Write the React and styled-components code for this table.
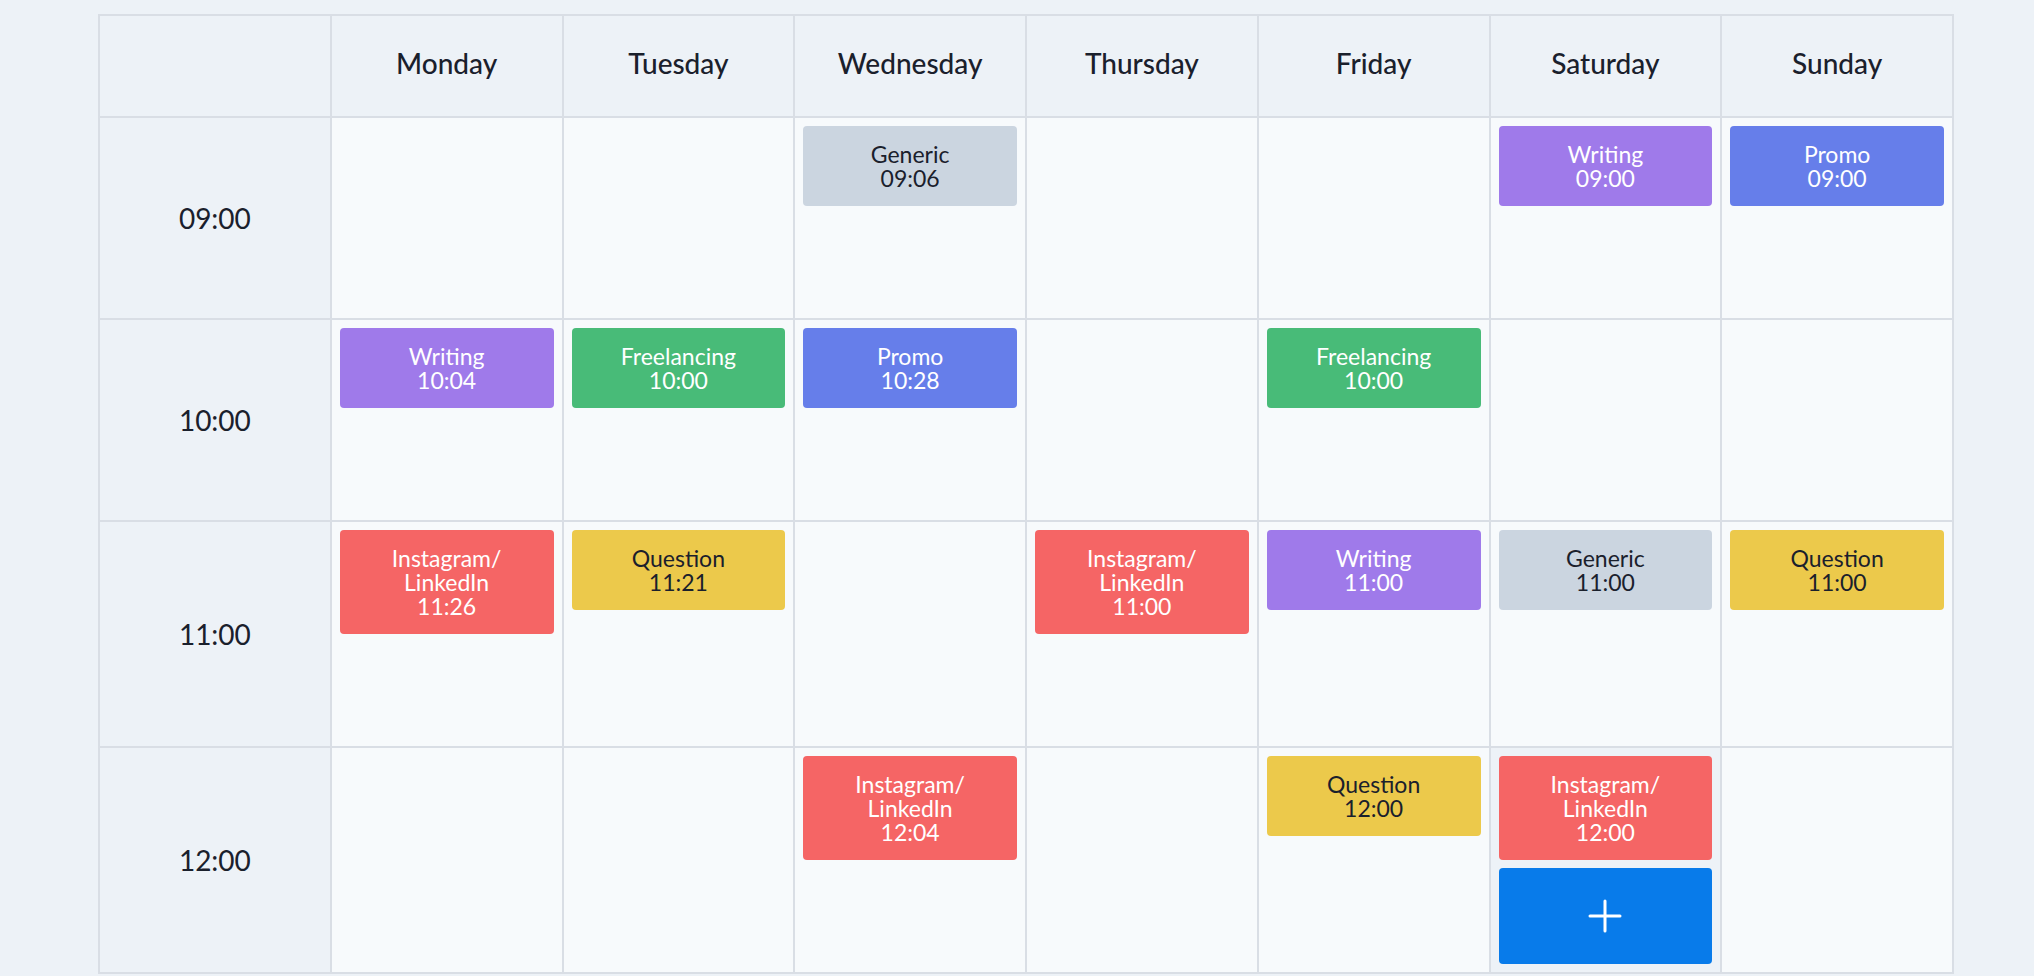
import React from 'react';
import styled, { createGlobalStyle } from 'styled-components';

const GlobalStyle = createGlobalStyle`
  html, body {
    margin: 0;
    padding: 0;
    overflow: hidden;
    background-color: #edf2f7;
    font-family: Lato, "Noto Sans", sans-serif;
    color: #1a202c;
  }
  * {
    box-sizing: border-box;
  }
`

const Page = styled.div`
  padding: 14px 80px 0 98px;
`

const Grid = styled.div`
  display: grid;
  grid-template-columns: repeat(8, 1fr);
  border-top: 2px solid #d9dee5;
  border-left: 2px solid #d9dee5;
`

const HeadCell = styled.div`
  display: flex;
  align-items: center;
  justify-content: center;
  height: 102px;
  padding-bottom: 6px;
  background-color: #edf2f7;
  border-right: 2px solid #d9dee5;
  border-bottom: 2px solid #d9dee5;
  font-size: 28px;
  font-weight: 500;
`

const TimeCell = styled.div`
  display: flex;
  align-items: center;
  justify-content: center;
  background-color: #edf2f7;
  border-right: 2px solid #d9dee5;
  border-bottom: 2px solid #d9dee5;
  font-size: 28px;
`

const Cell = styled.div`
  display: flex;
  flex-direction: column;
  gap: 8px;
  padding: 8px;
  min-width: 0;
  background-color: ${p => (p.$hover ? '#edf2f7' : '#f7fafc')};
  border-right: 2px solid #d9dee5;
  border-bottom: 2px solid #d9dee5;
`

const Event = styled.div`
  padding: 16px;
  border-radius: 4px;
  background-color: ${p => p.$bg};
  color: ${p => p.$fg};
  font-size: 23px;
  line-height: 24px;
  text-align: center;
`

const AddButton = styled.button`
  display: flex;
  align-items: center;
  justify-content: center;
  height: 96px;
  border: none;
  border-radius: 4px;
  background-color: #087bea;
  color: #fff;
  cursor: pointer;
  visibility: ${p => (p.$show ? 'visible' : 'hidden')};
`

const kinds = {
  Writing: { bg: '#9f7aea', fg: '#fff' },
  Promo: { bg: '#667eea', fg: '#fff' },
  Freelancing: { bg: '#48bb78', fg: '#fff' },
  'Instagram/LinkedIn': { bg: '#f56565', fg: '#fff' },
  Question: { bg: '#ecc94b', fg: '#1a202c' },
  Generic: { bg: '#cbd5e0', fg: '#1a202c' },
}

const days = ['Monday', 'Tuesday', 'Wednesday', 'Thursday', 'Friday', 'Saturday', 'Sunday']

const schedule = [
  { time: '09:00', slots: [null, null, ['Generic', '09:06'], null, null, ['Writing', '09:00'], ['Promo', '09:00']] },
  { time: '10:00', slots: [['Writing', '10:04'], ['Freelancing', '10:00'], ['Promo', '10:28'], null, ['Freelancing', '10:00'], null, null] },
  { time: '11:00', slots: [['Instagram/LinkedIn', '11:26'], ['Question', '11:21'], null, ['Instagram/LinkedIn', '11:00'], ['Writing', '11:00'], ['Generic', '11:00'], ['Question', '11:00']] },
  { time: '12:00', slots: [null, null, ['Instagram/LinkedIn', '12:04'], null, ['Question', '12:00'], ['Instagram/LinkedIn', '12:00'], null] },
]

function Title({ text }) {
  const parts = text.split('/')
  if (parts.length < 2) return text
  return <>{parts[0]}/<wbr />{parts[1]}</>
}

function Plus() {
  return (
    <svg width="34" height="34" viewBox="0 0 34 34" fill="none" stroke="#fff" strokeWidth="3" strokeLinecap="round">
      <line x1="17" y1="2" x2="17" y2="32" />
      <line x1="2" y1="17" x2="32" y2="17" />
    </svg>
  )
}

export default function App() {
  return (
    <Page>
      <GlobalStyle />
      <Grid>
        <HeadCell />
        {days.map(d => <HeadCell key={d}>{d}</HeadCell>)}
        {schedule.map((row, r) => (
          <React.Fragment key={row.time}>
            <TimeCell>{row.time}</TimeCell>
            {row.slots.map((s, i) => {
              const hover = r === 3 && i === 5
              return (
                <Cell key={i} $hover={hover}>
                  {s && (
                    <Event $bg={kinds[s[0]].bg} $fg={kinds[s[0]].fg}>
                      <div><Title text={s[0]} /></div>
                      <div>{s[1]}</div>
                    </Event>
                  )}
                  <AddButton $show={hover}><Plus /></AddButton>
                </Cell>
              )
            })}
          </React.Fragment>
        ))}
      </Grid>
    </Page>
  )
}
